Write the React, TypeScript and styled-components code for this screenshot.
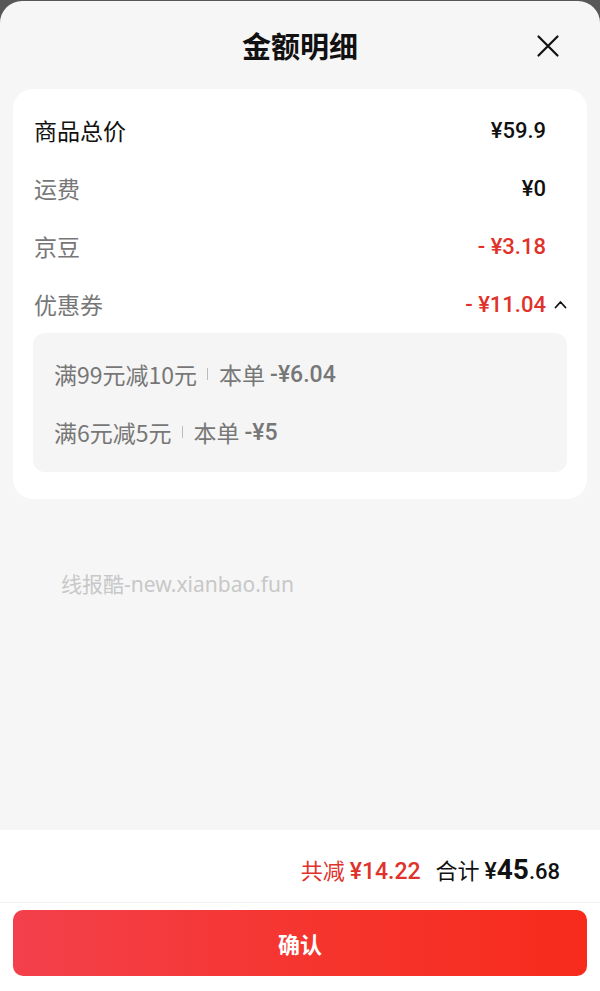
import React from "react";
import styled, { createGlobalStyle } from "styled-components";

const Global = createGlobalStyle`
  html, body { margin: 0; padding: 0; background: #575757; }
  body { font-family: Roboto, "Noto Sans CJK SC", sans-serif; }
  * { box-sizing: border-box; }
`;

const CJK = `"Noto Sans CJK SC", sans-serif`;
const NUM = `Roboto, "Noto Sans CJK SC", sans-serif`;

const Sheet = styled.div`
  margin-top: 1px;
  height: 990px;
  background: #f6f6f6;
  border-radius: 22px 22px 0 0;
  display: flex;
  flex-direction: column;
  overflow: hidden;
`;

const Header = styled.div`
  height: 88px;
  display: flex;
  align-items: center;
  justify-content: center;
  position: relative;
`;

const Title = styled.h1`
  margin: 0;
  font-family: ${CJK};
  font-size: 29px;
  font-weight: 700;
  color: #111;
`;

const CloseBtn = styled.button`
  position: absolute;
  right: 38px;
  top: 31px;
  width: 28px;
  height: 28px;
  border: 0;
  padding: 0;
  background: transparent;
  display: flex;
  align-items: center;
  justify-content: center;
`;

const Card = styled.div`
  margin: 0 13px;
  background: #fff;
  border-radius: 20px;
  padding: 12px 20px 27px;
`;

const Row = styled.div`
  height: 58px;
  display: flex;
  align-items: center;
  justify-content: space-between;
  padding-left: 1px;
`;

const Label = styled.span<{ $strong?: boolean }>`
  font-family: ${CJK};
  font-size: 23px;
  color: ${(p) => (p.$strong ? "#111" : "#777")};
`;

const ValueWrap = styled.div`
  display: flex;
  align-items: center;
`;

const Value = styled.span<{ $red?: boolean }>`
  font-family: ${NUM};
  font-size: 22px;
  font-weight: 500;
  color: ${(p) => (p.$red ? "#e0322b" : "#111")};
`;

const CaretSlot = styled.span`
  width: 21px;
  display: flex;
  justify-content: flex-end;
  align-items: center;
`;

const SubBox = styled.div`
  background: #f5f5f5;
  border-radius: 12px;
  padding: 12px 21px 11px;
`;

const SubLine = styled.div`
  height: 58px;
  display: flex;
  align-items: center;
  font-family: ${CJK};
  font-size: 23px;
  color: #777;
`;

const Divider = styled.span`
  display: inline-block;
  width: 1px;
  height: 12px;
  background: #bbb;
  margin: 0 11px 0 10px;
`;

const SubAmount = styled.span`
  font-family: ${NUM};
  font-weight: 500;
  font-size: 23px;
  margin-left: 5px;
`;

const Watermark = styled.div`
  margin: 71px 0 0 61px;
  font-family: "Noto Sans", ${CJK};
  font-size: 21px;
  color: #c8c8c8;
  line-height: 28px;
`;

const Spacer = styled.div`
  flex: 1;
`;

const Footer = styled.div`
  background: #fff;
  height: 161px;
  display: flex;
  flex-direction: column;
`;

const Summary = styled.div`
  height: 73px;
  display: flex;
  align-items: center;
  justify-content: flex-end;
  padding: 6px 40px 0 0;
  border-bottom: 1px solid #f2f2f2;
`;

const Saved = styled.span`
  font-family: ${CJK};
  font-size: 22px;
  color: #e0322b;
  display: flex;
  align-items: baseline;
`;

const Num = styled.span<{ $size: number; $bold?: boolean }>`
  font-family: ${NUM};
  font-size: ${(p) => p.$size}px;
  font-weight: ${(p) => (p.$bold ? 700 : 500)};
`;

const Total = styled.span`
  font-family: ${CJK};
  font-size: 22px;
  color: #111;
  margin-left: 15px;
  display: flex;
  align-items: baseline;
`;

const BtnArea = styled.div`
  padding: 7px 13px 0;
`;

const Confirm = styled.button`
  width: 100%;
  height: 66px;
  border: 0;
  border-radius: 10px;
  background: linear-gradient(90deg, #f3404c 0%, #f5352f 50%, #f72b1c 100%);
  color: #fff;
  font-family: ${CJK};
  font-size: 22px;
  font-weight: 700;
`;

export default function App() {
  return (
    <>
      <Global />
      <Sheet>
        <Header>
          <Title>金额明细</Title>
          <CloseBtn aria-label="关闭">
            <svg width="24" height="24" viewBox="0 0 24 24">
              <path d="M2.5 2.5 L21.5 21.5 M21.5 2.5 L2.5 21.5" stroke="#111" strokeWidth="2.2" strokeLinecap="round" />
            </svg>
          </CloseBtn>
        </Header>
        <Card>
          <Row>
            <Label $strong>商品总价</Label>
            <ValueWrap>
              <Value>¥59.9</Value>
              <CaretSlot />
            </ValueWrap>
          </Row>
          <Row>
            <Label>运费</Label>
            <ValueWrap>
              <Value>¥0</Value>
              <CaretSlot />
            </ValueWrap>
          </Row>
          <Row>
            <Label>京豆</Label>
            <ValueWrap>
              <Value $red>- ¥3.18</Value>
              <CaretSlot />
            </ValueWrap>
          </Row>
          <Row>
            <Label>优惠券</Label>
            <ValueWrap>
              <Value $red>- ¥11.04</Value>
              <CaretSlot>
                <svg width="13" height="9" viewBox="0 0 13 9">
                  <path d="M1.5 7.5 L6.5 2 L11.5 7.5" stroke="#111" strokeWidth="1.8" fill="none" strokeLinecap="round" strokeLinejoin="round" />
                </svg>
              </CaretSlot>
            </ValueWrap>
          </Row>
          <SubBox>
            <SubLine>
              满99元减10元<Divider />本单<SubAmount>-¥6.04</SubAmount>
            </SubLine>
            <SubLine>
              满6元减5元<Divider />本单<SubAmount>-¥5</SubAmount>
            </SubLine>
          </SubBox>
        </Card>
        <Watermark>线报酷-new.xianbao.fun</Watermark>
        <Spacer />
        <Footer>
          <Summary>
            <Saved>
              共减&nbsp;<Num $size={23}>¥14.22</Num>
            </Saved>
            <Total>
              合计&nbsp;<Num $size={23}>¥</Num>
              <Num $size={28} $bold>45</Num>
              <Num $size={22}>.68</Num>
            </Total>
          </Summary>
          <BtnArea>
            <Confirm>确认</Confirm>
          </BtnArea>
        </Footer>
      </Sheet>
    </>
  );
}
